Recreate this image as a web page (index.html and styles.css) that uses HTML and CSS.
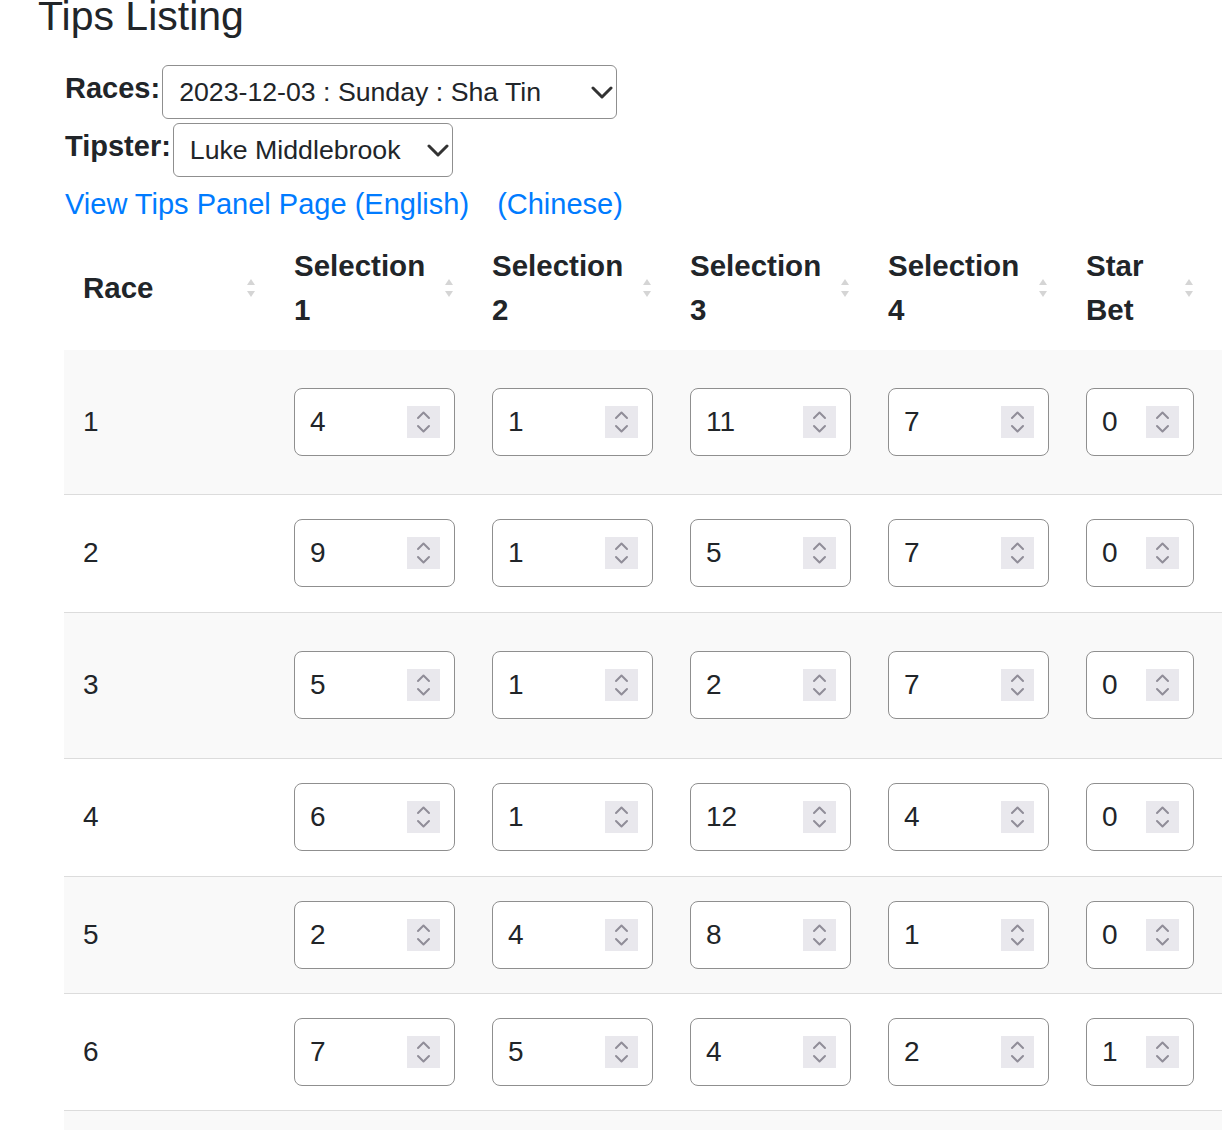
FILE: index.html
```html
<!DOCTYPE html>
<html lang="en">
<head>
<meta charset="utf-8">
<title>Tips Listing</title>
<link rel="stylesheet" href="styles.css">
</head>
<body>
<div class="page">
  <h1 class="title">Tips Listing</h1>
  <div class="content">
    <div class="field-row">
      <label class="field-label" for="races">Races:</label>
      <span class="select-wrap select-races">
        <select id="races" class="select"><option>2023-12-03 : Sunday : Sha Tin</option></select>
        <svg class="chev" viewBox="0 0 22 13"><polyline points="2,2 11,11 20,2"/></svg>
      </span>
    </div>
    <div class="field-row field-row-2">
      <label class="field-label" for="tipster">Tipster:</label>
      <span class="select-wrap select-tipster">
        <select id="tipster" class="select"><option>Luke Middlebrook</option></select>
        <svg class="chev" viewBox="0 0 22 13"><polyline points="2,2 11,11 20,2"/></svg>
      </span>
    </div>
    <div class="links">
      <a href="#" class="link">View Tips Panel Page (English)</a>
      <a href="#" class="link link-cn">(Chinese)</a>
    </div>

    <table class="tips">
      <colgroup>
        <col class="c-race"><col class="c-sel"><col class="c-sel"><col class="c-sel"><col class="c-sel"><col class="c-star">
      </colgroup>
      <thead>
        <tr>
          <th class="th-race"><div class="th-inner"><span>Race</span><svg class="sort" viewBox="0 0 8 18"><polygon points="4,0 8,6 0,6"/><polygon points="0,12 8,12 4,18"/></svg></div></th>
          <th><div class="th-inner"><span>Selection<br>1</span><svg class="sort" viewBox="0 0 8 18"><polygon points="4,0 8,6 0,6"/><polygon points="0,12 8,12 4,18"/></svg></div></th>
          <th><div class="th-inner"><span>Selection<br>2</span><svg class="sort" viewBox="0 0 8 18"><polygon points="4,0 8,6 0,6"/><polygon points="0,12 8,12 4,18"/></svg></div></th>
          <th><div class="th-inner"><span>Selection<br>3</span><svg class="sort" viewBox="0 0 8 18"><polygon points="4,0 8,6 0,6"/><polygon points="0,12 8,12 4,18"/></svg></div></th>
          <th><div class="th-inner"><span>Selection<br>4</span><svg class="sort" viewBox="0 0 8 18"><polygon points="4,0 8,6 0,6"/><polygon points="0,12 8,12 4,18"/></svg></div></th>
          <th class="th-star"><div class="th-inner"><span>Star<br>Bet</span><svg class="sort" viewBox="0 0 8 18"><polygon points="4,0 8,6 0,6"/><polygon points="0,12 8,12 4,18"/></svg></div></th>
        </tr>
      </thead>
      <tbody id="rows"></tbody>
    </table>
  </div>
</div>
<script src="app.js"></script>
</body>
</html>
```
FILE: app.js
```js
var data = [
  [1, [4, 1, 11, 7, 0], 'tall'],
  [2, [9, 1, 5, 7, 0], ''],
  [3, [5, 1, 2, 7, 0], 'taller'],
  [4, [6, 1, 12, 4, 0], ''],
  [5, [2, 4, 8, 1, 0], 'short'],
  [6, [7, 5, 4, 2, 1], 'short']
];
var spin = '<span class="spin"><svg viewBox="0 0 33 32"><polyline points="11,12 16.5,6.5 22,12"/><polyline points="11,20 16.5,25.5 22,20"/></svg></span>';
var html = '';
data.forEach(function (r) {
  html += '<tr class="' + r[2] + '"><td class="td-race">' + r[0] + '</td>';
  r[1].forEach(function (v, i) {
    html += '<td class="td-sel' + (i === 4 ? ' td-star' : '') + '"><div class="numbox' + (i === 4 ? ' numbox-star' : '') + '"><input class="num" type="text" value="' + v + '" readonly>' + spin + '</div></td>';
  });
  html += '</tr>';
});
html += '<tr class="more"><td colspan="6"></td></tr>';
document.getElementById('rows').innerHTML = html;
```
FILE: styles.css
```css
html, body {
  margin: 0;
  padding: 0;
  overflow: hidden;
  background: #fff;
}
body {
  font-family: "Liberation Sans", Arial, Helvetica, sans-serif;
  font-size: 29px;
  line-height: 1.5;
  color: #212529;
}
.page {
  padding-left: 38px;
}
.title {
  margin: -8px 0 0 0;
  font-size: 41px;
  font-weight: 400;
  line-height: 48px;
  height: 48px;
}
.content {
  margin-left: 26px;
  margin-top: 25px;
}
.field-row {
  display: flex;
  align-items: center;
  height: 54px;
}
.field-row-2 {
  margin-top: 4px;
}
.field-label {
  font-weight: 700;
  margin-right: 2px;
  margin-left: 1px;
  margin-bottom: 6px;
}
.select-wrap {
  position: relative;
  display: inline-block;
  height: 54px;
}
.select-races { width: 455px; }
.select-tipster { width: 280px; }
.select {
  -webkit-appearance: none;
  appearance: none;
  width: 100%;
  height: 54px;
  box-sizing: border-box;
  border: 1px solid #8f8f8f;
  border-radius: 6px;
  background: #fff;
  font-family: "Liberation Sans", Arial, Helvetica, sans-serif;
  font-size: 26.7px;
  color: #212529;
  padding: 0 0 0 16px;
  margin: 0;
}
.chev {
  position: absolute;
  right: 4px;
  top: 21px;
  width: 22px;
  height: 13px;
  pointer-events: none;
}
.chev polyline {
  fill: none;
  stroke: #333;
  stroke-width: 3;
  stroke-linecap: round;
  stroke-linejoin: round;
}
.links {
  margin-top: 6px;
  line-height: 42px;
  padding-left: 1px;
}
.link {
  color: #007bff;
  text-decoration: none;
}
.link-cn {
  margin-left: 20px;
}
.tips {
  margin-top: 1px;
  border-collapse: collapse;
  table-layout: fixed;
  width: 1158px;
}
.c-race { width: 212px; }
.c-sel { width: 198px; }
.c-star { width: 154px; }
.tips th {
  text-align: left;
  font-weight: 700;
  font-size: 29.5px;
  line-height: 44px;
  padding: 18px 21px 18px 18px;
  vertical-align: middle;
}
.tips th.th-race { padding-left: 19px; }
.tips th.th-star { padding-right: 29px; }
.th-inner {
  display: flex;
  justify-content: space-between;
  align-items: center;
}
.sort {
  width: 8px;
  height: 18px;
  flex: none;
}
.sort polygon { fill: #d5d5d5; }
.tips tbody tr {
  height: 118px;
  border-top: 1px solid #dcdcdc;
}
.tips tbody tr:first-child { border-top: none; }
.tips tbody tr:nth-child(odd) { background: #f9f9f9; }
.tips tbody tr.tall { height: 144px; }
.tips tbody tr.taller { height: 146px; }
.tips tbody tr.short { height: 117px; }
.tips tbody tr.more { height: 118px; }
.tips td {
  padding: 0 0 0 18px;
  vertical-align: middle;
  font-size: 28px;
}
.tips td.td-race { padding-left: 19px; }
.numbox {
  display: flex;
  align-items: center;
  width: 161px;
  height: 68px;
  box-sizing: border-box;
  border: 1px solid #8f8f8f;
  border-radius: 8px;
  background: #fff;
  padding: 0 14px 0 15px;
}
.numbox-star { width: 108px; }
.num {
  flex: 1;
  min-width: 0;
  border: none;
  outline: none;
  background: transparent;
  font-family: "Liberation Sans", Arial, Helvetica, sans-serif;
  font-size: 28px;
  color: #212529;
  padding: 0;
  margin: 0;
}
.spin {
  flex: none;
  width: 33px;
  height: 32px;
  background: #e9e8ed;
}
.spin svg {
  display: block;
  width: 33px;
  height: 32px;
}
.spin polyline {
  fill: none;
  stroke: #908d98;
  stroke-width: 2;
  stroke-linecap: round;
  stroke-linejoin: round;
}
```
